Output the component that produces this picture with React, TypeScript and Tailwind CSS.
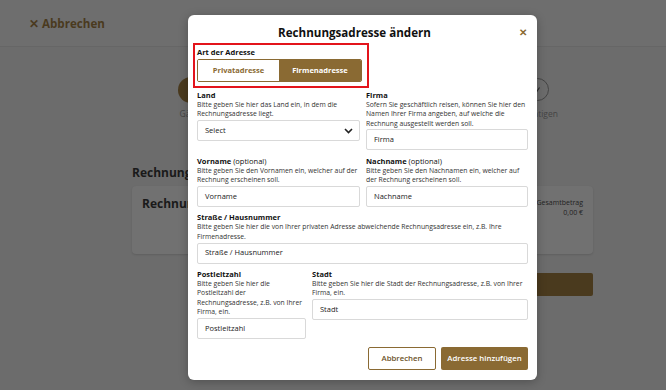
import React from "react";

function Field({
  label,
  optional,
  lines,
  placeholder,
  select,
}: {
  label: string;
  optional?: boolean;
  lines: string[];
  placeholder: string;
  select?: boolean;
}) {
  return (
    <div className="flex flex-col">
      <div className="text-[7.5px] leading-[10px] text-[#111] whitespace-nowrap">
        <span className="font-bold">{label}</span>
        {optional && <span> (optional)</span>}
      </div>
      <div className="text-[6.8px] leading-[9.3px] text-[#333]">
        {lines.map((l, i) => (
          <div key={i} className="whitespace-nowrap">
            {l}
          </div>
        ))}
      </div>
      <div className="mt-[1.5px] h-[21px] border border-[#d9d9d9] rounded-[2px] flex items-center justify-between pl-[7px] pr-[6px] text-[7.5px] text-[#222]">
        <span>{placeholder}</span>
        {select && (
          <svg width="9" height="6" viewBox="0 0 9 6">
            <path d="M1 1l3.5 3.5L8 1" fill="none" stroke="#222" strokeWidth="1.6" />
          </svg>
        )}
      </div>
    </div>
  );
}

export default function App() {
  return (
    <div className="relative w-[666px] h-[390px] overflow-hidden bg-[#6c6c6c] font-['Open_Sans',sans-serif]">
      {/* background page */}
      <div className="h-[47px] bg-[#6e6e6e] border-b border-[#666] flex items-center pl-[29px] pt-[1px]">
        <span className="text-[11.6px] font-bold text-[#4a3a1e]">✕ Abbrechen</span>
      </div>
      <div className="flex justify-between pl-[171px] pr-[109px] mt-[30px]">
        <div className="flex flex-col items-center w-[40px]">
          <div className="w-[26px] h-[26px] rounded-full bg-[#4a3a1e]" />
          <span className="mt-[5px] text-[8.5px] leading-[12px] text-[#444] whitespace-nowrap">Gäste</span>
        </div>
        <div className="flex flex-col items-center w-[40px]">
          <div className="w-[23px] h-[23px] mt-[1px] mb-[2px] rounded-full border border-[#444] flex items-center justify-center">
            <svg width="8" height="8" viewBox="0 0 8 8">
              <path d="M1.5 4.5l1.8 1.8L6.5 1.5" fill="none" stroke="#2a2a2a" strokeWidth="1.1" />
            </svg>
          </div>
          <span className="mt-[5px] text-[8.5px] leading-[12px] text-[#444] whitespace-nowrap">Bestätigen</span>
        </div>
      </div>
      <div className="pl-[132px] pr-[73px] mt-[45px]">
        <div className="text-[12px] font-bold text-[#1a1a1a] leading-[16px]">Rechnungsadresse</div>
        <div className="mt-[5px] h-[68px] rounded-[4px] bg-[#717171] shadow-[0_1px_2px_rgba(0,0,0,0.12)] flex justify-between pl-[10px] pr-[10px] pt-[10px]">
          <div className="text-[12px] font-bold text-[#1a1a1a] leading-[16px]">Rechnungsadresse</div>
          <div className="flex flex-col items-end text-[7px] text-[#222] leading-[10px] pt-[2px]">
            <span>Gesamtbetrag</span>
            <span>0,00 €</span>
          </div>
        </div>
        <div className="flex justify-end mt-[19px]">
          <div className="w-[200px] h-[23px] rounded-[2px] bg-[#4a3a1e] flex items-center pl-[133px]">
            <svg width="6" height="10" viewBox="0 0 6 10">
              <path d="M1 1l4 4-4 4" fill="none" stroke="#7d6d55" strokeWidth="1" />
            </svg>
          </div>
        </div>
      </div>

      {/* modal */}
      <div className="absolute left-[188px] top-[15px] w-[349px] h-[365px] bg-white rounded-[6px] shadow-[0_2px_10px_rgba(0,0,0,0.25)] flex flex-col px-[9px]">
        <div className="h-[20px] mt-[8px] flex items-center">
          <span className="flex-1 text-center text-[11.6px] font-bold text-[#111]">Rechnungsadresse ändern</span>
          <span className="w-[16px] text-right pr-[1px] text-[9.5px] font-bold text-[#8a6a33]">✕</span>
        </div>
        <div className="-ml-[4px] w-[176px] border-2 border-[#e3141b] pl-[2px] pt-[2px] pb-[4px]">
          <div className="text-[7.5px] leading-[10px] font-bold text-[#111]">Art der Adresse</div>
          <div className="mt-[2px] w-[165px] h-[23px] border border-[#8a6a33] rounded-[2px] grid grid-cols-[81px_1fr] overflow-hidden">
            <div className="flex items-center justify-center text-[7.5px] font-bold text-[#8a6a33] bg-white">Privatadresse</div>
            <div className="flex items-center justify-center text-[7.5px] font-bold text-white bg-[#8a6a33]">Firmenadresse</div>
          </div>
        </div>
        <div className="mt-[2px] grid grid-cols-[163px_162px] gap-x-[6px] gap-y-[5.5px] items-start">
          <Field
            label="Land"
            lines={["Bitte geben Sie hier das Land ein, in dem die", "Rechnungsadresse liegt."]}
            placeholder="Select"
            select
          />
          <Field
            label="Firma"
            lines={[
              "Sofern Sie geschäftlich reisen, können Sie hier den",
              "Namen Ihrer Firma angeben, auf welche die",
              "Rechnung ausgestellt werden soll.",
            ]}
            placeholder="Firma"
          />
          <Field
            label="Vorname"
            optional
            lines={["Bitte geben Sie den Vornamen ein, welcher auf der", "Rechnung erscheinen soll."]}
            placeholder="Vorname"
          />
          <Field
            label="Nachname"
            optional
            lines={["Bitte geben Sie den Nachnamen ein, welcher auf", "der Rechnung erscheinen soll."]}
            placeholder="Nachname"
          />
        </div>
        <div className="mt-[5.5px]">
          <Field
            label="Straße / Hausnummer"
            lines={[
              "Bitte geben Sie hier die von Ihrer privaten Adresse abweichende Rechnungsadresse ein, z.B. Ihre",
              "Firmenadresse.",
            ]}
            placeholder="Straße / Hausnummer"
          />
        </div>
        <div className="mt-[5.5px] grid grid-cols-[109px_1fr] gap-x-[6px] items-start">
          <Field
            label="Postleitzahl"
            lines={["Bitte geben Sie hier die", "Postleitzahl der", "Rechnungsadresse, z.B. von Ihrer", "Firma, ein."]}
            placeholder="Postleitzahl"
          />
          <Field
            label="Stadt"
            lines={["Bitte geben Sie hier die Stadt der Rechnungsadresse, z.B. von Ihrer", "Firma, ein."]}
            placeholder="Stadt"
          />
        </div>
        <div className="mt-auto mb-[10px] flex justify-end gap-[5px]">
          <div className="w-[68px] h-[23px] rounded-[2px] border border-[#8a6a33] flex items-center justify-center text-[7.8px] font-semibold text-[#6b5128]">
            Abbrechen
          </div>
          <div className="w-[87px] h-[23px] rounded-[2px] bg-[#8a6a33] flex items-center justify-center text-[7.8px] font-semibold text-white">
            Adresse hinzufügen
          </div>
        </div>
      </div>
    </div>
  );
}
